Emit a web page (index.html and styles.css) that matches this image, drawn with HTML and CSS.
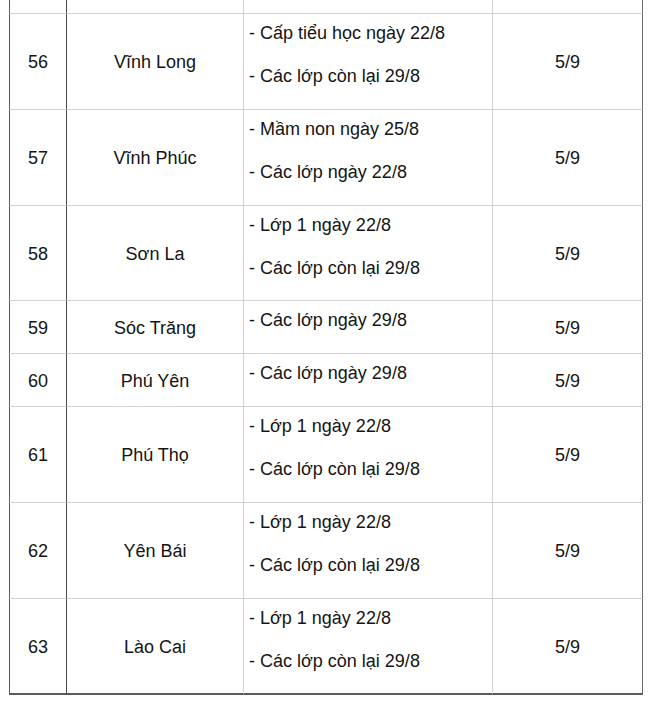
FILE: index.html
```html
<!DOCTYPE html>
<html lang="vi">
<head>
<meta charset="utf-8">
<title>Lịch tựu trường</title>
<link rel="stylesheet" href="styles.css">
</head>
<body>
<div class="wrap">
<table class="sched">
  <colgroup>
    <col class="c-no">
    <col class="c-prov">
    <col class="c-date">
    <col class="c-open">
  </colgroup>
  <tbody>
    <tr class="cut"><td class="no"></td><td class="prov"></td><td class="date"></td><td class="open"></td></tr>
    <tr><td class="no">56</td><td class="prov">Vĩnh Long</td><td class="date"><p>- Cấp tiểu học ngày 22/8</p><p>- Các lớp còn lại 29/8</p></td><td class="open">5/9</td></tr>
    <tr><td class="no">57</td><td class="prov">Vĩnh Phúc</td><td class="date"><p>- Mầm non ngày 25/8</p><p>- Các lớp ngày 22/8</p></td><td class="open">5/9</td></tr>
    <tr class="tight"><td class="no">58</td><td class="prov">Sơn La</td><td class="date"><p>- Lớp 1 ngày 22/8</p><p>- Các lớp còn lại 29/8</p></td><td class="open">5/9</td></tr>
    <tr><td class="no">59</td><td class="prov">Sóc Trăng</td><td class="date"><p>- Các lớp ngày 29/8</p></td><td class="open">5/9</td></tr>
    <tr><td class="no">60</td><td class="prov">Phú Yên</td><td class="date"><p>- Các lớp ngày 29/8</p></td><td class="open">5/9</td></tr>
    <tr><td class="no">61</td><td class="prov">Phú Thọ</td><td class="date"><p>- Lớp 1 ngày 22/8</p><p>- Các lớp còn lại 29/8</p></td><td class="open">5/9</td></tr>
    <tr><td class="no">62</td><td class="prov">Yên Bái</td><td class="date"><p>- Lớp 1 ngày 22/8</p><p>- Các lớp còn lại 29/8</p></td><td class="open">5/9</td></tr>
    <tr class="last tight"><td class="no">63</td><td class="prov">Lào Cai</td><td class="date"><p>- Lớp 1 ngày 22/8</p><p>- Các lớp còn lại 29/8</p></td><td class="open">5/9</td></tr>
  </tbody>
</table>
</div>
</body>
</html>
```
FILE: styles.css
```css
html, body {
  margin: 0;
  padding: 0;
  background: #fff;
}
.wrap {
  padding-left: 9px;
}
.sched {
  border-collapse: separate;
  border-spacing: 0;
  table-layout: fixed;
  width: 634px;
  font-family: "Liberation Sans", Arial, sans-serif;
  font-size: 18px;
  color: #141414;
}
.c-no { width: 58px; }
.c-prov { width: 177px; }
.c-date { width: 249px; }
.c-open { width: 150px; }
.sched td {
  box-sizing: border-box;
  padding: 5px 0 4px;
  border-right: 1px solid #d2d2d2;
  border-bottom: 1px solid #d2d2d2;
  vertical-align: middle;
  text-align: center;
  line-height: 28px;
}
.sched td.no {
  border-left: 1px solid #5a5a5a;
  border-right-color: #4a4a4a;
}
.sched td.date {
  text-align: left;
  padding-left: 5px;
}
.sched td.open {
  border-right-color: #6a6a6a;
}
.sched td p {
  margin: 0 0 15px;
}
.sched tr.tight td {
  padding-bottom: 3px;
}
.sched tr.cut td {
  height: 14px;
  padding: 0;
}
.sched tr.last td {
  border-bottom: 2px solid #5a5a5a;
}
```
